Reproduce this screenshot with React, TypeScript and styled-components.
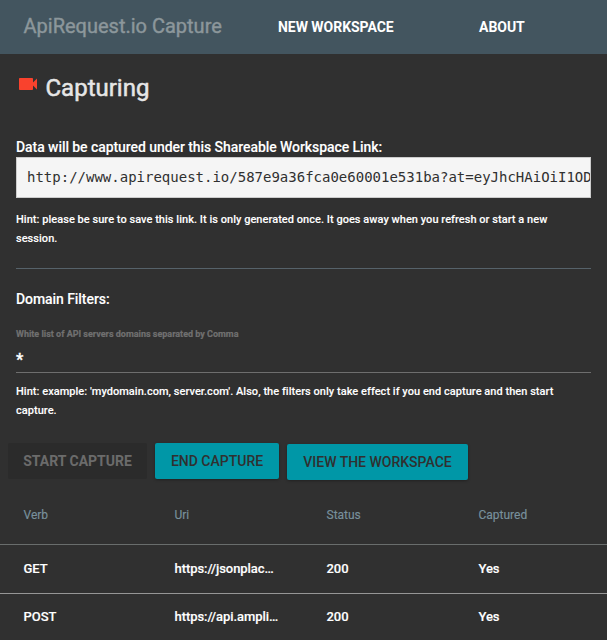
import React from "react";
import styled, { createGlobalStyle } from "styled-components";

const GlobalStyle = createGlobalStyle`
  * { box-sizing: border-box; }
  body {
    margin: 0;
    background: #303030;
    color: #fff;
    font-family: Roboto, "Liberation Sans", sans-serif;
    overflow: hidden;
  }
`;

const Page = styled.div`
  width: 100%;
  height: 640px;
  overflow: hidden;
  background: #303030;
`;

const AppBar = styled.header`
  display: flex;
  height: 54px;
  padding-left: 23.5px;
  background: #43555f;
  white-space: nowrap;
`;

const Brand = styled.div`
  width: 254.5px;
  font-size: 20px;
  line-height: 53px;
  color: #8c979b;
  -webkit-text-stroke: 0.4px #8c979b;
`;

const NavLink = styled.a<{ $width?: number }>`
  width: ${(p) => (p.$width ? `${p.$width}px` : "auto")};
  font-size: 14px;
  font-weight: 700;
  line-height: 55px;
  letter-spacing: -0.03px;
  color: #fff;
`;

const Content = styled.main`
  padding: 0 16px;
`;

const StatusTitle = styled.h1`
  display: flex;
  height: 83px;
  margin: 0;
  font-size: 24px;
  font-weight: 400;
  line-height: 68px;
  color: #e6e6e6;
  -webkit-text-stroke: 0.5px #e6e6e6;
`;

const CameraIcon = styled.svg`
  flex: none;
  width: 24px;
  height: 24px;
  margin: 18px 5.5px 0 0;
  fill: #f9422d;
  stroke: none;
`;

const Label = styled.div`
  height: 20px;
  font-size: 14px;
  font-weight: 500;
  line-height: 20px;
  letter-spacing: -0.065px;
  color: #fff;
  -webkit-text-stroke: 0.1px #fff;
`;

const LinkBox = styled.pre`
  height: 41px;
  margin: 0;
  padding: 0 10px;
  overflow: hidden;
  border: 1px solid #ccc;
  background: #f5f5f5;
  color: #303030;
  font-family: "DejaVu Sans Mono", monospace;
  font-size: 14px;
  line-height: 39px;
`;

const Hint = styled.p`
  height: 70px;
  margin: 0;
  font-size: 11px;
  font-weight: 500;
  line-height: 19px;
  letter-spacing: 0.035px;
  color: #fff;
  -webkit-text-stroke: 0.1px #fff;
`;

const ShareHint = styled(Hint)`
  padding: 12px 15px 0 0;
`;

const FilterHint = styled(Hint)`
  padding-top: 9px;
`;

const Filters = styled.section`
  padding-top: 20px;
  border-top: 1px solid #56626a;
`;

const FieldLabel = styled.label`
  display: block;
  margin-top: 18px;
  height: 14px;
  font-size: 9px;
  font-weight: 700;
  line-height: 14px;
  color: #707070;
  -webkit-text-stroke: 0.2px #707070;
`;

const FieldValue = styled.div`
  height: 32px;
  border-bottom: 1px solid #6e6e6e;
  font-size: 16px;
  font-weight: 700;
  line-height: 37px;
  -webkit-text-stroke: 0.3px #fff;
`;

const Actions = styled.div`
  display: flex;
  align-items: flex-start;
  gap: 8px;
  height: 48px;
  padding-left: 8px;
`;

const Button = styled.button<{ $width: number; $drop?: boolean }>`
  width: ${(p) => p.$width}px;
  height: 36px;
  margin-top: ${(p) => (p.$drop ? 1 : 0)}px;
  padding: 0;
  border: 0;
  border-radius: 2px;
  background: #0097a7;
  color: #303030;
  box-shadow: 0 1px 3px rgba(0, 0, 0, 0.3);
  font-family: inherit;
  font-size: 14px;
  font-weight: 500;
  line-height: 36px;
  white-space: nowrap;

  &:disabled {
    background: #2b2b2b;
    color: #6b6b6b;
    box-shadow: none;
    font-weight: 700;
  }
`;

const Row = styled.div<{ $head?: boolean }>`
  display: grid;
  grid-template-columns: 151px 152px 152px 1fr;
  height: ${(p) => (p.$head ? 54 : 49)}px;
  padding-left: 23.5px;
  border-bottom: 1px solid ${(p) => (p.$head ? "#696d6c" : "#969696")};
  font-size: ${(p) => (p.$head ? 12 : 13)}px;
  font-weight: ${(p) => (p.$head ? 400 : 500)};
  line-height: 48px;
  letter-spacing: ${(p) => (p.$head ? 0 : -0.06)}px;
  color: ${(p) => (p.$head ? "#78909c" : "#fff")};
  -webkit-text-stroke: ${(p) => (p.$head ? "0.15px #78909c" : "0.15px #fff")};

  &:last-child {
    line-height: 46px;
  }
`;

const Cell = styled.div`
  white-space: nowrap;
`;

const requests = [
  { verb: "GET", uri: "https://jsonplac…", status: 200, captured: "Yes" },
  { verb: "POST", uri: "https://api.ampli…", status: 200, captured: "Yes" },
];

export default function App() {
  return (
    <Page>
      <GlobalStyle />
      <AppBar>
        <Brand>ApiRequest.io Capture</Brand>
        <NavLink $width={201}>NEW WORKSPACE</NavLink>
        <NavLink>ABOUT</NavLink>
      </AppBar>
      <Content>
        <StatusTitle>
          <CameraIcon viewBox="0 0 24 24">
            <path d="M17 10.5V7c0-.55-.45-1-1-1H4c-.55 0-1 .45-1 1v10c0 .55.45 1 1 1h12c.55 0 1-.45 1-1v-3.500l4 4v-11l-4 4z" />
          </CameraIcon>
          Capturing
        </StatusTitle>
        <Label>Data will be captured under this Shareable Workspace Link:</Label>
        <LinkBox>http://www.apirequest.io/587e9a36fca0e60001e531ba?at=eyJhcHAiOiI1OD</LinkBox>
        <ShareHint>
          Hint: please be sure to save this link. It is only generated once. It goes away when you refresh or start a new
          session.
        </ShareHint>
        <Filters>
          <Label>Domain Filters:</Label>
          <FieldLabel>White list of API servers domains separated by Comma</FieldLabel>
          <FieldValue>*</FieldValue>
          <FilterHint>
            Hint: example: 'mydomain.com, server.com'. Also, the filters only take effect if you end capture and then
            start capture.
          </FilterHint>
        </Filters>
      </Content>
      <Actions>
        <Button $width={139} disabled>START CAPTURE</Button>
        <Button $width={124}>END CAPTURE</Button>
        <Button $width={181} $drop>VIEW THE WORKSPACE</Button>
      </Actions>
      <Row $head>
        <Cell>Verb</Cell>
        <Cell>Uri</Cell>
        <Cell>Status</Cell>
        <Cell>Captured</Cell>
      </Row>
      {requests.map((r) => (
        <Row key={r.verb}>
          <Cell>{r.verb}</Cell>
          <Cell>{r.uri}</Cell>
          <Cell>{r.status}</Cell>
          <Cell>{r.captured}</Cell>
        </Row>
      ))}
    </Page>
  );
}
